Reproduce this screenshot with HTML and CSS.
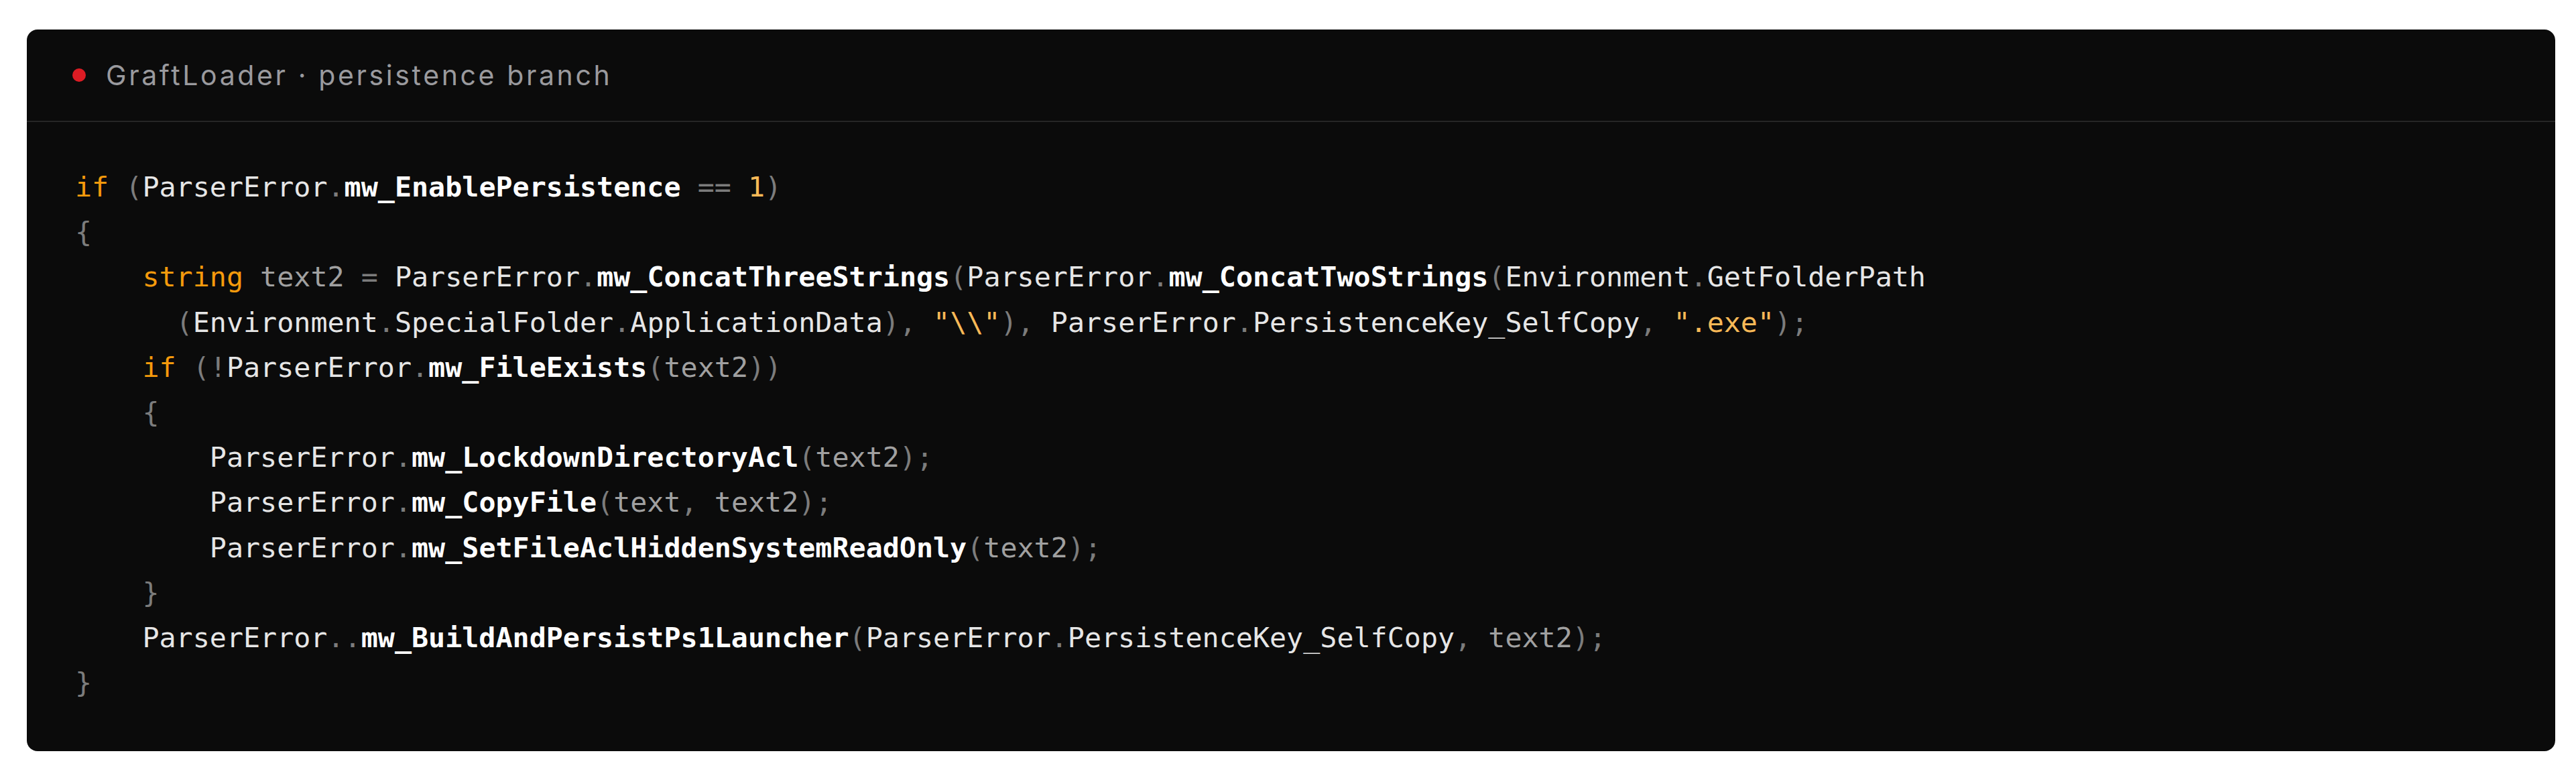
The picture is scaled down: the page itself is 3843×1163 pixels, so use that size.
FILE: index.html
```html
<!DOCTYPE html>
<html lang="en">
<head>
<meta charset="utf-8">
<title>GraftLoader · persistence branch</title>
<link rel="stylesheet" href="styles.css">
</head>
<body>
<section class="card">
  <header class="card-head">
    <span class="dot"></span>
    <span class="title">GraftLoader · persistence branch</span>
  </header>
  <div class="code">
    <div class="line"><span class="kw">if</span> <span class="p">(</span>ParserError<span class="p">.</span><span class="fn">mw_EnablePersistence</span> <span class="p">==</span> <span class="lit">1</span><span class="p">)</span></div>
    <div class="line"><span class="p">{</span></div>
    <div class="line">    <span class="kw">string</span> <span class="var">text2</span> <span class="p">=</span> ParserError<span class="p">.</span><span class="fn">mw_ConcatThreeStrings</span><span class="p">(</span>ParserError<span class="p">.</span><span class="fn">mw_ConcatTwoStrings</span><span class="p">(</span>Environment<span class="p">.</span>GetFolderPath</div>
    <div class="line">      <span class="p">(</span>Environment<span class="p">.</span>SpecialFolder<span class="p">.</span>ApplicationData<span class="p">),</span> <span class="lit">"\\"</span><span class="p">),</span> ParserError<span class="p">.</span>PersistenceKey_SelfCopy<span class="p">,</span> <span class="lit">".exe"</span><span class="p">);</span></div>
    <div class="line">    <span class="kw">if</span> <span class="p">(!</span>ParserError<span class="p">.</span><span class="fn">mw_FileExists</span><span class="p">(</span><span class="var">text2</span><span class="p">))</span></div>
    <div class="line">    <span class="p">{</span></div>
    <div class="line">        ParserError<span class="p">.</span><span class="fn">mw_LockdownDirectoryAcl</span><span class="p">(</span><span class="var">text2</span><span class="p">);</span></div>
    <div class="line">        ParserError<span class="p">.</span><span class="fn">mw_CopyFile</span><span class="p">(</span><span class="var">text</span><span class="p">,</span> <span class="var">text2</span><span class="p">);</span></div>
    <div class="line">        ParserError<span class="p">.</span><span class="fn">mw_SetFileAclHiddenSystemReadOnly</span><span class="p">(</span><span class="var">text2</span><span class="p">);</span></div>
    <div class="line">    <span class="p">}</span></div>
    <div class="line">    ParserError<span class="p">..</span><span class="fn">mw_BuildAndPersistPs1Launcher</span><span class="p">(</span>ParserError<span class="p">.</span>PersistenceKey_SelfCopy<span class="p">,</span> <span class="var">text2</span><span class="p">);</span></div>
    <div class="line"><span class="p">}</span></div>
  </div>
</section>
</body>
</html>
```

FILE: styles.css
```css
html, body {
  background: #ffffff;
}

body {
  margin: 0;
  padding: 44px 31px 46px 40px;
}

.card {
  background: #0b0b0b;
  border-radius: 16px;
  overflow: hidden;
}

.card-head {
  display: flex;
  align-items: center;
  gap: 30px;
  height: 136px;
  padding: 0 68px;
  border-bottom: 2px solid #262626;
}

.dot {
  width: 20px;
  height: 20px;
  border-radius: 50%;
  background: #dc1c24;
  flex: none;
}

.title {
  font-family: Inter, "Noto Sans", sans-serif;
  font-size: 41px;
  letter-spacing: 0.088em;
  color: #9a9a9e;
}

.code {
  display: flex;
  flex-direction: column;
  padding: 63px 72px 69px;
  font-family: "DejaVu Sans Mono", "Liberation Mono", monospace;
  font-size: 41.7px;
  line-height: 67.2px;
  color: #e6e6e6;
}

.line {
  white-space: pre;
  height: 67.2px;
}

.kw {
  color: #f59a0c;
}

.lit {
  color: #f8b957;
}

.p {
  color: #7c7c7c;
}

.var {
  color: #a0a0a0;
}

.fn {
  color: #ffffff;
  font-weight: 700;
}
```
